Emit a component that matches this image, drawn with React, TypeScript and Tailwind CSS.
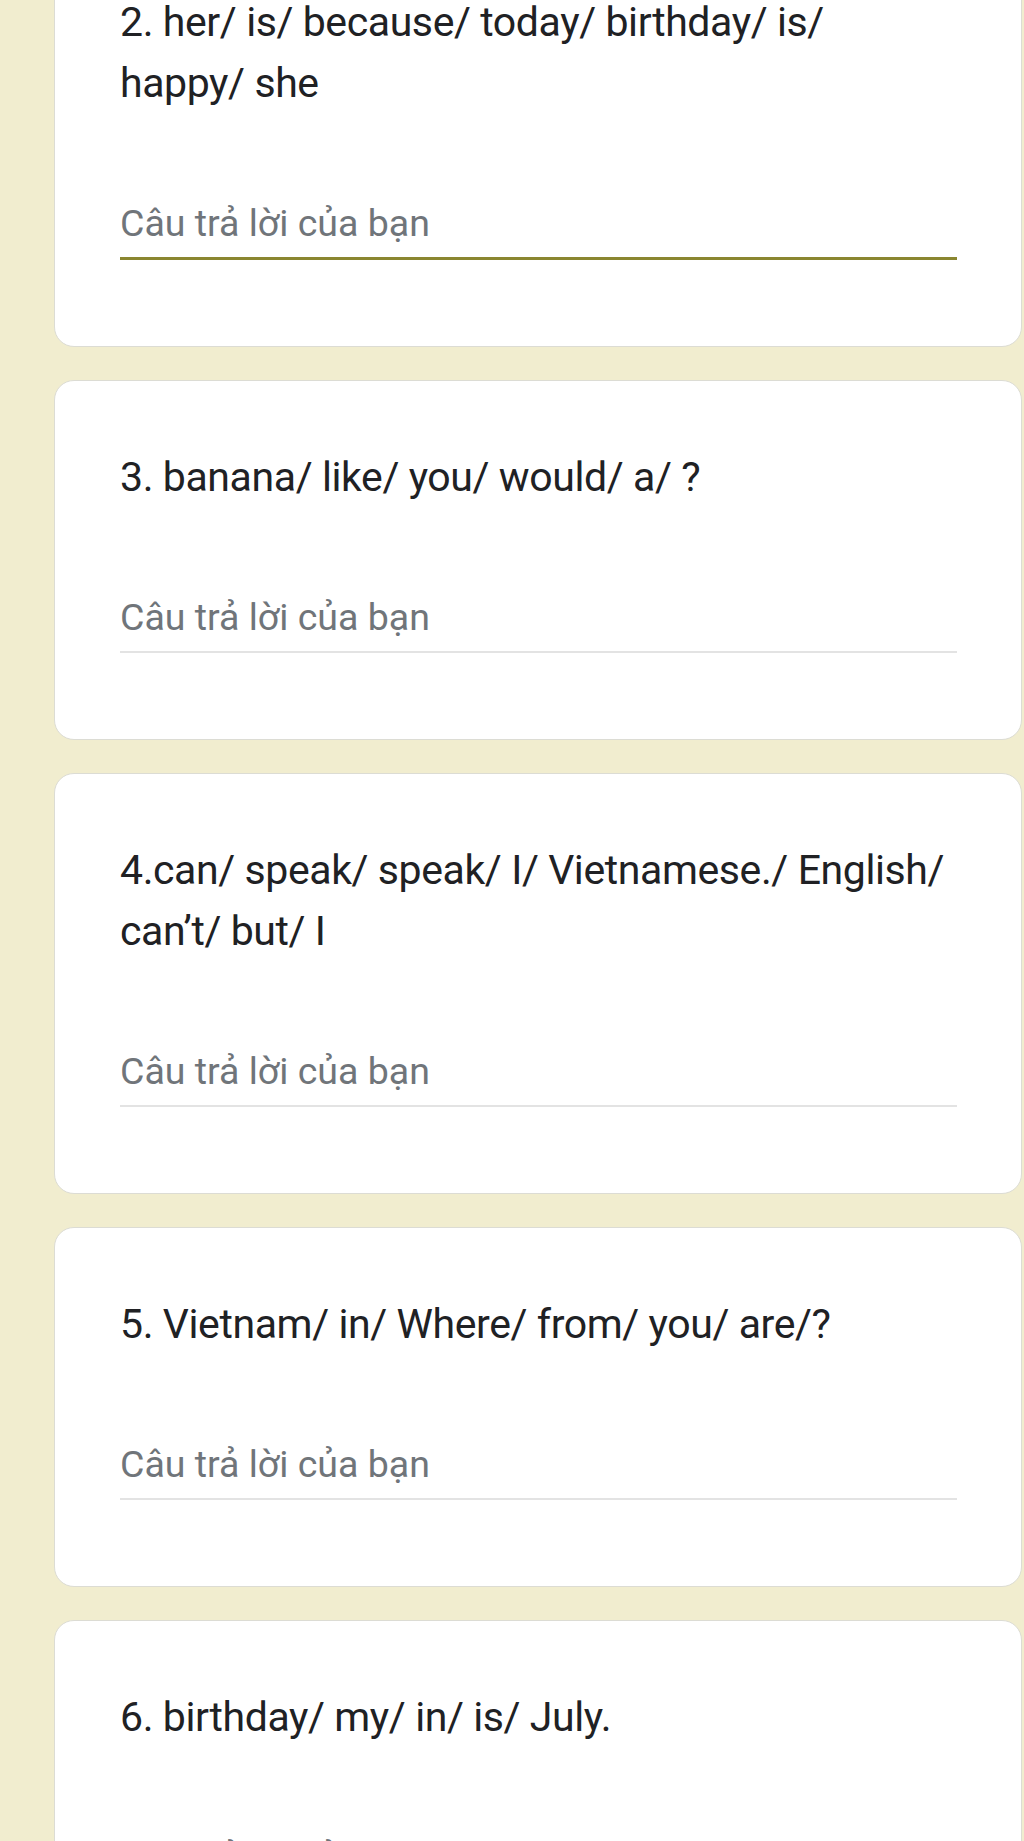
const questions = [
  { id: 2, text: '2. her/ is/ because/ today/ birthday/ is/ happy/ she', focused: true },
  { id: 3, text: '3. banana/ like/ you/ would/ a/ ?' },
  { id: 4, text: '4.can/ speak/ speak/ I/ Vietnamese./ English/ can’t/ but/ I' },
  { id: 5, text: '5. Vietnam/ in/ Where/ from/ you/ are/?' },
  { id: 6, text: '6. birthday/ my/ in/ is/ July.' },
]

function QuestionCard({ text, focused }: { text: string; focused?: boolean }) {
  return (
    <div className="bg-white rounded-[20px] border border-[#dcdcd4] pt-[66px] pb-[86px] pl-[65px] pr-[64px]">
      <div className="text-[41px] leading-[61px] text-[#202124] font-['Roboto',sans-serif] tracking-[-0.4px]">
        {text}
      </div>
      <div
        className={
          'mt-[87px] pb-[12px] ' +
          (focused ? 'border-b-[3px] border-[#8a8630]' : 'border-b-2 border-[#e3e3e3]')
        }
      >
        <div className="text-[37.5px] leading-[44px] text-[#70757a] font-['Roboto',sans-serif]">
          Câu trả lời của bạn
        </div>
      </div>
    </div>
  )
}

export default function App() {
  return (
    <div className="w-[1024px] h-[1841px] overflow-hidden bg-[#f1edcf]">
      <div className="-mt-[75px] pl-[54px] pr-[2px] flex flex-col gap-[33px]">
        {questions.map((q) => (
          <QuestionCard key={q.id} text={q.text} focused={q.focused} />
        ))}
      </div>
    </div>
  )
}
